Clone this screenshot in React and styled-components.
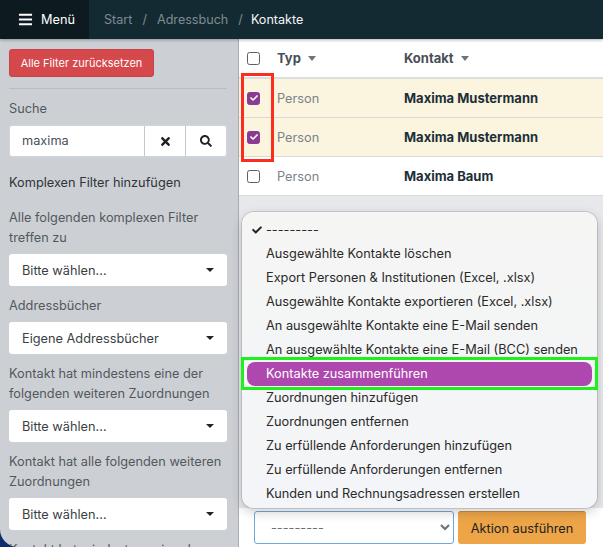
import React from 'react';
import styled, { createGlobalStyle } from 'styled-components';
import { FaBars, FaCheck, FaSearch, FaTimes } from 'react-icons/fa';

const GlobalStyle = createGlobalStyle`
  html, body {
    margin: 0;
    height: 100%;
    overflow: hidden;
    background: #0f2c6e;
    font-family: Inter, "Liberation Sans", sans-serif;
    font-size: 12.75px;
    color: #212529;
  }
  * { box-sizing: border-box; }
`;

const actions = [
  'Ausgewählte Kontakte löschen',
  'Export Personen & Institutionen (Excel, .xlsx)',
  'Ausgewählte Kontakte exportieren (Excel, .xlsx)',
  'An ausgewählte Kontakte eine E-Mail senden',
  'An ausgewählte Kontakte eine E-Mail (BCC) senden',
  'Kontakte zusammenführen',
  'Zuordnungen hinzufügen',
  'Zuordnungen entfernen',
  'Zu erfüllende Anforderungen hinzufügen',
  'Zu erfüllende Anforderungen entfernen',
  'Kunden und Rechnungsadressen erstellen',
];

const contacts = [
  { name: 'Maxima Mustermann', selected: true },
  { name: 'Maxima Mustermann', selected: true },
  { name: 'Maxima Baum', selected: false },
];

function App() {
  return (
    <Shell>
      <GlobalStyle />
      <TopBar>
        <MenuButton>
          <FaBars size={15} />
          Menü
        </MenuButton>
        <Crumbs>
          <Crumb>Start</Crumb>
          <Slash>/</Slash>
          <Crumb>Adressbuch</Crumb>
          <Slash>/</Slash>
          <Crumb $active>Kontakte</Crumb>
        </Crumbs>
      </TopBar>

      <Body>
        <Sidebar>
          <ResetButton>Alle Filter zurücksetzen</ResetButton>
          <Divider />
          <Label>Suche</Label>
          <SearchGroup>
            <SearchText>maxima</SearchText>
            <SearchAddon><FaTimes size={13} /></SearchAddon>
            <SearchAddon><FaSearch size={12} /></SearchAddon>
          </SearchGroup>
          <SectionTitle>Komplexen Filter hinzufügen</SectionTitle>
          <Label>Alle folgenden komplexen Filter treffen zu</Label>
          <FilterSelect>Bitte wählen...<Caret /></FilterSelect>
          <Label>Addressbücher</Label>
          <FilterSelect>Eigene Addressbücher<Caret /></FilterSelect>
          <Label>Kontakt hat mindestens eine der folgenden weiteren Zuordnungen</Label>
          <FilterSelect>Bitte wählen...<Caret /></FilterSelect>
          <Label>Kontakt hat alle folgenden weiteren Zuordnungen</Label>
          <FilterSelect>Bitte wählen...<Caret /></FilterSelect>
          <Label>Kontakt hat mindestens eine der</Label>
        </Sidebar>

        <Main>
          <TableHead>
            <Checkbox />
            <HeadCell>Typ<SortCaret /></HeadCell>
            <HeadCell>Kontakt<SortCaret /></HeadCell>
          </TableHead>
          {contacts.map((contact, i) => (
            <TableRow key={i} $selected={contact.selected}>
              <Checkbox $checked={contact.selected}>
                {contact.selected && <FaCheck size={8} />}
              </Checkbox>
              <TypeCell>Person</TypeCell>
              <NameCell>{contact.name}</NameCell>
            </TableRow>
          ))}
          <Spacer />
          <ActionBar>
            <ActionSelect defaultValue="">
              <option value="">---------</option>
            </ActionSelect>
            <ActionButton>Aktion ausführen</ActionButton>
            <Cutoff>:</Cutoff>
          </ActionBar>

          <RowMarker />
          <ActionMenu>
            <MenuItem>
              <MenuCheck><FaCheck size={10} /></MenuCheck>
              ---------
            </MenuItem>
            {actions.map((action) => (
              <MenuItem key={action} $active={action === 'Kontakte zusammenführen'}>
                {action}
              </MenuItem>
            ))}
            <ItemMarker />
          </ActionMenu>
        </Main>
      </Body>
    </Shell>
  );
}

export default App;

const Shell = styled.div`
  width: 603px;
  height: 547px;
  display: flex;
  flex-direction: column;
  overflow: hidden;
`;

const TopBar = styled.header`
  height: 39px;
  flex: none;
  display: flex;
  background: #142a33;
  box-shadow: 0 1px 3px rgba(0, 0, 0, 0.3);
  position: relative;
  z-index: 2;
`;

const MenuButton = styled.div`
  width: 89px;
  display: flex;
  align-items: center;
  gap: 8px;
  padding-left: 18px;
  background: #0d1b20;
  color: #fff;
`;

const Crumbs = styled.nav`
  display: flex;
  align-items: center;
  padding-left: 15px;
  gap: 10px;
  font-size: 12.6px;
`;

const Crumb = styled.span`
  color: ${(p) => (p.$active ? '#f4f5f6' : '#7f8b91')};
  margin-left: ${(p) => (p.$active ? '-2px' : '0')};
`;

const Slash = styled.span`
  color: #7f8b91;
`;

const Body = styled.div`
  flex: 1;
  min-height: 0;
  display: flex;
`;

const Sidebar = styled.aside`
  width: 239px;
  flex: none;
  padding: 10px 11px 0 9px;
  background: #ccd0d5;
  border-right: 1px solid #a9adb2;
  border-bottom-left-radius: 18px;
  display: flex;
  flex-direction: column;
  overflow: hidden;
`;

const ResetButton = styled.button`
  flex: none;
  align-self: flex-start;
  width: 145px;
  height: 28px;
  padding: 0;
  border: 1px solid #c9404a;
  border-radius: 3px;
  background: #d5484c;
  color: #fff;
  font: 11px Inter, "Liberation Sans", sans-serif;
`;

const Divider = styled.hr`
  flex: none;
  width: 100%;
  margin: 11px 0 10px;
  border: 0;
  border-top: 1px solid #b9bdc2;
`;

const Label = styled.div`
  flex: none;
  line-height: 20px;
  color: #53585d;
  margin-bottom: 6px;
`;

const SearchGroup = styled.div`
  flex: none;
  height: 32px;
  display: flex;
  background: #fff;
  border: 1px solid #ced4da;
  border-radius: 3px;
  margin-bottom: 16px;
`;

const SearchText = styled.div`
  flex: 1;
  padding-left: 12px;
  line-height: 30px;
  color: #495057;
`;

const SearchAddon = styled.div`
  width: 41px;
  display: flex;
  align-items: center;
  justify-content: center;
  border-left: 1px solid #c3c7cb;
  color: #1f2326;
`;

const SectionTitle = styled.div`
  flex: none;
  line-height: 20px;
  color: #2f3438;
  margin-bottom: 15px;
`;

const FilterSelect = styled.div`
  flex: none;
  height: 32px;
  display: flex;
  align-items: center;
  justify-content: space-between;
  padding: 0 13px;
  background: #fff;
  border-radius: 3px;
  color: #3a3f44;
  margin-bottom: 10px;
`;

const Caret = styled.span`
  width: 0;
  height: 0;
  border-left: 4px solid transparent;
  border-right: 4px solid transparent;
  border-top: 4px solid #212529;
`;

const Main = styled.main`
  flex: 1;
  min-width: 0;
  display: flex;
  flex-direction: column;
  position: relative;
  background: #fff;
`;

const TableHead = styled.div`
  height: 40px;
  flex: none;
  display: grid;
  grid-template-columns: 30px 127px 1fr;
  align-items: center;
  padding-left: 8px;
  border-bottom: 2px solid #dcdee0;
`;

const HeadCell = styled.div`
  display: flex;
  align-items: center;
  gap: 7px;
  font-size: 13px;
  font-weight: 700;
  color: #494f57;
`;

const SortCaret = styled.span`
  width: 0;
  height: 0;
  border-left: 4px solid transparent;
  border-right: 4px solid transparent;
  border-top: 5px solid #6c757d;
`;

const TableRow = styled.div`
  height: 39px;
  flex: none;
  display: grid;
  grid-template-columns: 30px 127px 1fr;
  align-items: center;
  padding-left: 8px;
  background: ${(p) => (p.$selected ? '#fbf5e0' : '#fff')};
  border-bottom: 1px solid #d7d9db;
`;

const Checkbox = styled.span`
  width: 13px;
  height: 13px;
  display: flex;
  align-items: center;
  justify-content: center;
  border-radius: 2.5px;
  border: 1px solid ${(p) => (p.$checked ? '#8b3a92' : '#5c5f62')};
  background: ${(p) => (p.$checked ? '#8b3a92' : '#fff')};
  color: #fff;
`;

const TypeCell = styled.div`
  color: #7b8289;
`;

const NameCell = styled.div`
  font-size: 13px;
  font-weight: 700;
  color: #1c2f38;
`;

const Spacer = styled.div`
  flex: 1;
  background: #e6e8eb;
`;

const ActionBar = styled.div`
  height: 39px;
  flex: none;
  display: flex;
  align-items: flex-start;
  gap: 4px;
  padding: 3px 0 0 15px;
  background: #fff;
  white-space: nowrap;
`;

const ActionSelect = styled.select`
  flex: none;
  width: 200px;
  height: 33px;
  padding-left: 12px;
  background: #fff;
  border: 1px solid #6ea8dc;
  border-radius: 3px;
  color: #6a7076;
  font: 12.75px Inter, "Liberation Sans", sans-serif;
  outline: none;
`;

const ActionButton = styled.button`
  flex: none;
  width: 128px;
  height: 33px;
  padding: 0;
  border: 0;
  border-top: 1px solid #c98a3c;
  border-radius: 3px;
  background: #eea548;
  color: #222;
  font: 12.75px Inter, "Liberation Sans", sans-serif;
`;

const Cutoff = styled.span`
  margin-left: 12px;
  line-height: 30px;
  color: #777;
`;

const ActionMenu = styled.div`
  position: absolute;
  left: 3px;
  top: 173px;
  width: 355px;
  height: 296px;
  padding: 6px 5px;
  background: linear-gradient(#f5f5f4, #f3f5f8);
  border-radius: 12px;
  box-shadow: 0 0 0 1px rgba(0, 0, 0, 0.12), 0 4px 12px rgba(0, 0, 0, 0.2);
  z-index: 3;
`;

const MenuItem = styled.div`
  height: 24px;
  line-height: 24px;
  padding-left: 19px;
  position: relative;
  border-radius: 8px;
  white-space: nowrap;
  color: ${(p) => (p.$active ? '#fff' : '#2a2a2a')};
  background: ${(p) => (p.$active ? '#ae48ae' : 'transparent')};
`;

const MenuCheck = styled.span`
  position: absolute;
  left: 5px;
  top: 1px;
  color: #222;
`;

// annotations drawn over the screenshot
const RowMarker = styled.div`
  position: absolute;
  left: 2px;
  top: 34px;
  width: 33px;
  height: 89px;
  border: 3px solid #fb2d1e;
  z-index: 1;
`;

const ItemMarker = styled.div`
  position: absolute;
  left: -1px;
  top: 145px;
  width: 357px;
  height: 33px;
  border: 3px solid #1df01d;
`;
